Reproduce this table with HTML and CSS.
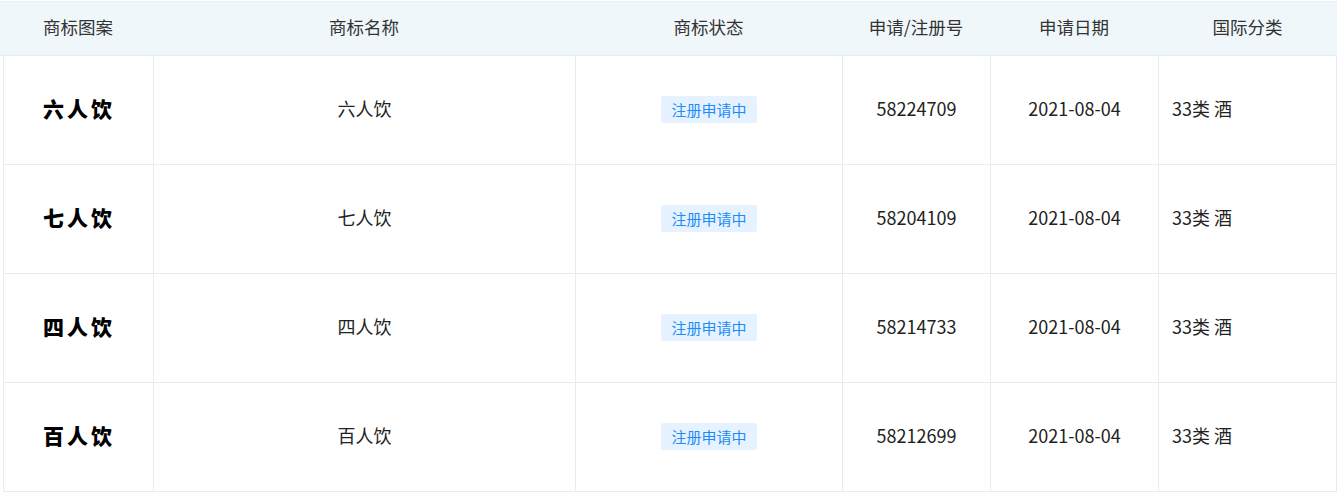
FILE: index.html
```html
<!DOCTYPE html>
<html lang="zh-CN">
<head>
<meta charset="utf-8">
<link rel="stylesheet" href="styles.css">
</head>
<body>
<div class="table">
  <div class="row head">
    <div class="cell">商标图案</div>
    <div class="cell">商标名称</div>
    <div class="cell">商标状态</div>
    <div class="cell">申请/注册号</div>
    <div class="cell">申请日期</div>
    <div class="cell">国际分类</div>
  </div>
  <div class="row body">
    <div class="cell"><span class="logo">六人饮</span></div>
    <div class="cell">六人饮</div>
    <div class="cell"><span class="tag">注册申请中</span></div>
    <div class="cell">58224709</div>
    <div class="cell">2021-08-04</div>
    <div class="cell left">33类 酒</div>
  </div>
  <div class="row body">
    <div class="cell"><span class="logo">七人饮</span></div>
    <div class="cell">七人饮</div>
    <div class="cell"><span class="tag">注册申请中</span></div>
    <div class="cell">58204109</div>
    <div class="cell">2021-08-04</div>
    <div class="cell left">33类 酒</div>
  </div>
  <div class="row body">
    <div class="cell"><span class="logo">四人饮</span></div>
    <div class="cell">四人饮</div>
    <div class="cell"><span class="tag">注册申请中</span></div>
    <div class="cell">58214733</div>
    <div class="cell">2021-08-04</div>
    <div class="cell left">33类 酒</div>
  </div>
  <div class="row body">
    <div class="cell"><span class="logo">百人饮</span></div>
    <div class="cell">百人饮</div>
    <div class="cell"><span class="tag">注册申请中</span></div>
    <div class="cell">58212699</div>
    <div class="cell">2021-08-04</div>
    <div class="cell left">33类 酒</div>
  </div>
</div>
</body>
</html>
```
FILE: styles.css
```css
* { box-sizing: border-box; }
html, body { margin: 0; padding: 0; background: #fff; }
body {
  font-family: "Noto Sans CJK SC", "Noto Sans", sans-serif;
  color: #333;
  width: 1338px;
  height: 493px;
  overflow: hidden;
}
.table {
  padding-top: 1px;
  width: 1337px;
}
.row {
  display: grid;
  grid-template-columns: 150px 422px 267px 148px 168px 179px;
}
.head {
  background: #f0f7fb;
  border-top: 1px solid #e6eff6;
  border-bottom: 1px solid #e3edf5;
  height: 55px;
  padding-left: 3px;
  font-size: 17.5px;
}
.head .cell {
  display: flex;
  align-items: center;
  justify-content: center;
  padding-bottom: 4px;
  color: #333;
}
.body {
  height: 109px;
  margin-left: 3px;
  border-bottom: 1px solid #e3edf5;
  font-size: 18px;
}
.body .cell {
  display: flex;
  align-items: center;
  justify-content: center;
  padding-bottom: 4px;
  border-left: 1px solid #e3edf5;
  color: #222;
}
.body .cell:last-child {
  border-right: 1px solid #e3edf5;
}
.body .cell.left {
  justify-content: flex-start;
  padding-left: 13px;
}
.logo {
  font-family: "Noto Sans CJK SC", serif;
  font-weight: 900;
  font-size: 21px;
  letter-spacing: 3px;
  color: #000;
  margin-left: 1px;
}
.tag {
  display: inline-block;
  background: #e6f2ff;
  color: #1d8cf8;
  font-size: 15px;
  line-height: 27px;
  height: 27px;
  padding: 0 10px;
  border-radius: 2px;
  margin-top: 2px;
}
```
